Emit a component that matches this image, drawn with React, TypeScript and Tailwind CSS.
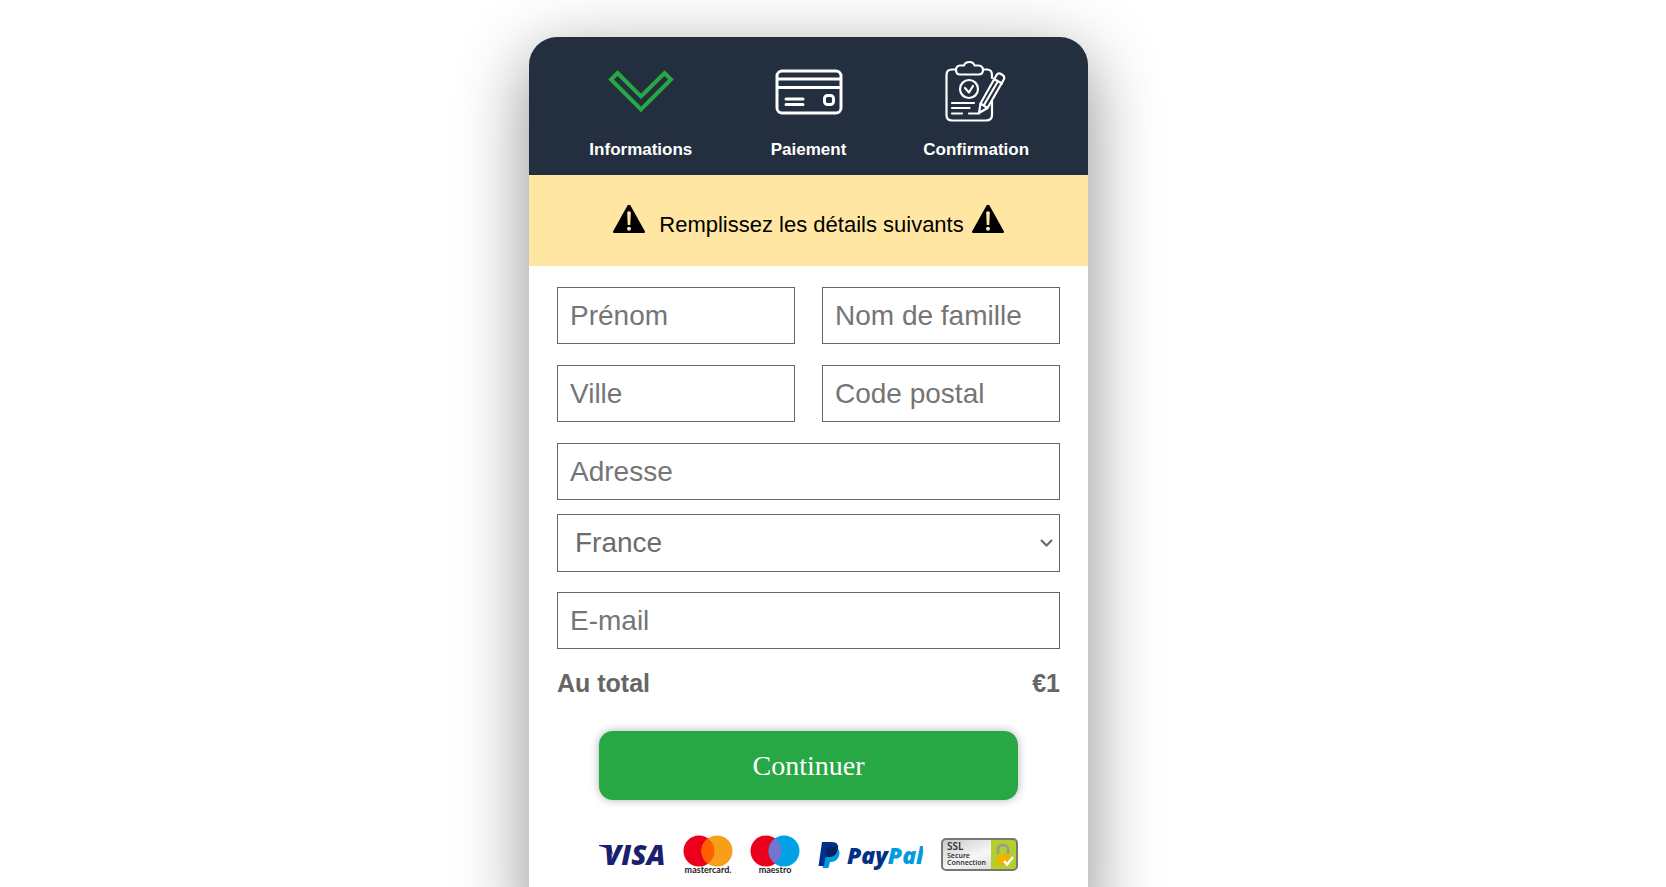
import type { ReactNode } from 'react';

interface StepProps {
  label: string;
  children: ReactNode;
}

function Step({ label, children }: StepProps) {
  return (
    <li className="flex flex-1 flex-col items-center">
      {children}
      <span className="mt-[15px] text-[17px] leading-5 font-bold text-white">{label}</span>
    </li>
  );
}

function ChevronIcon() {
  return (
    <svg className="h-17 w-17" viewBox="0 0 68 68" fill="none" stroke="#28a745" strokeWidth={4} aria-hidden="true">
      <path d="M10.500 16 L34 39.500 L57.500 16 L64 22.500 L34 52.500 L4 22.500 Z" />
    </svg>
  );
}

function CardIcon() {
  return (
    <svg className="h-17 w-17" viewBox="0 0 68 68" fill="none" stroke="#fff" aria-hidden="true">
      <rect x="2" y="14" width="64" height="42" rx="5" strokeWidth={3} />
      <path d="M2 22 H66 M2 30.500 H66" strokeWidth={3} />
      <path d="M11 42 H28 M11 47.500 H28" strokeWidth={3} strokeLinecap="round" />
      <rect x="49.500" y="38.500" width="9" height="9" rx="3" strokeWidth={3} />
    </svg>
  );
}

function ClipboardIcon() {
  return (
    <svg
      className="h-17 w-17"
      viewBox="0 0 68 68"
      fill="none"
      stroke="#fff"
      strokeWidth={2.2}
      strokeLinecap="round"
      strokeLinejoin="round"
      aria-hidden="true"
    >
      <path d="M14 12.500 H10 Q4.500 12.500 4.500 18 V58 Q4.500 63.500 10 63.500 H44 Q50 63.500 50 58 V44 M41 12.500 H45 Q50 12.500 50 18 V21" />
      <path d="M18 8.500 H22 Q23 5 27.500 5 Q31.500 5 32.500 8.500 H36.500 Q41 9 41 13 Q41 17.500 36.500 17.500 H18 Q14 17.500 14 13 Q14 9 18 8.500 Z" />
      <circle cx="27" cy="32" r="9" />
      <path d="M23 31 L27 35.500 L31 29" />
      <path d="M10 46 H32 M10 51 H27.500 M10 56.500 H20 M27 56.500 H37" />
      <path d="M37 56 L38.500 46.500 L54 19 Q56 15 59 17 L60.500 18 Q63.500 20 61.500 23 L45.500 51 Z" />
      <path d="M52 22 L60 26.500 M38.500 46.500 L45.500 51 M42 48 L55.500 25" />
    </svg>
  );
}

function WarningIcon() {
  return (
    <svg className="mb-1 h-8 w-8" viewBox="0 0 32 32" aria-hidden="true">
      <path d="M14.500 2.500 Q16 1 17.500 2.500 L32 28.500 Q32 30 31 30 H1 Q0 30 0 28.500 Z" fill="#000" />
      <path d="M14.200 9 Q16 7.500 17.800 9 L17.300 22 H14.700 Z" fill="#ffe7a3" />
      <circle cx="16" cy="25.800" r="2" fill="#ffe7a3" />
    </svg>
  );
}

interface FieldProps {
  name: string;
  label: string;
  type?: string;
}

function Field({ name, label, type = 'text' }: FieldProps) {
  return (
    <input
      name={name}
      type={type}
      placeholder={label}
      aria-label={label}
      className="block h-[57px] w-full min-w-0 border border-[#666] px-3 text-[28px] text-[#333] placeholder:text-[#757575]"
    />
  );
}

function VisaLogo() {
  return (
    <svg className="h-10 w-[66px]" viewBox="0 0 66 40" role="img" aria-label="Visa">
      <text x="5" y="30" fontFamily="Open Sans, sans-serif" fontSize="28" fontWeight="800" fontStyle="italic" fill="#1a1f71">VISA</text>
      <path d="M0 10 H9 Q12 10 12.500 13 L14 20 Q9 12 0 11 Z" fill="#1a1f71" />
    </svg>
  );
}

interface CirclesLogoProps {
  name: string;
  right: string;
  overlap: string;
}

function CirclesLogo({ name, right, overlap }: CirclesLogoProps) {
  return (
    <svg className="h-10 w-[50px]" viewBox="0 0 50 40" role="img" aria-label={name}>
      <circle cx="16" cy="16" r="15.500" fill="#eb001b" />
      <circle cx="34" cy="16" r="15.500" fill={right} />
      <path d="M25 3.400 A15.500 15.500 0 0 1 25 28.600 A15.500 15.500 0 0 1 25 3.400 Z" fill={overlap} />
      <text x="25" y="38" textAnchor="middle" fontFamily="Lato, sans-serif" fontSize="9" fontWeight="700" fill="#222">{name}</text>
    </svg>
  );
}

function PaypalLogo() {
  return (
    <svg className="h-10 w-[105px]" viewBox="0 0 105 40" role="img" aria-label="PayPal">
      <path d="M8 12 H17 Q23 14 21 21 Q19 27 12 27 L10.500 33 H4.500 Z" fill="#009cde" />
      <path d="M4 7 H14 Q21 7 20 14 Q18 22 10 22 H7.500 L6 31 H0.500 Z" fill="#003087" />
      <path d="M9 12 H19.500 Q20 22 10 22 H7.500 Z" fill="#012169" />
      <text x="29" y="29" fontFamily="Open Sans, sans-serif" fontSize="23" fontWeight="800" fontStyle="italic" fill="#003087">
        Pay<tspan fill="#009cde">Pal</tspan>
      </text>
    </svg>
  );
}

function SslBadge() {
  return (
    <svg className="h-10 w-[77px]" viewBox="0 0 77 40" role="img" aria-label="SSL Secure Connection">
      <defs>
        <linearGradient id="ssl-bg" x1="0" y1="0" x2="1" y2="1">
          <stop offset="0" stopColor="#c9c9c9" />
          <stop offset="0.5" stopColor="#f7f7f7" />
          <stop offset="1" stopColor="#cfcfcf" />
        </linearGradient>
      </defs>
      <rect x="1" y="4" width="75" height="31" rx="4" fill="url(#ssl-bg)" />
      <path d="M50 4 H72 Q76 4 76 8 V31 Q76 35 72 35 H50 Z" fill="#b2cf2e" />
      <rect x="1" y="4" width="75" height="31" rx="4" fill="none" stroke="#777" strokeWidth={2} />
      <g fontFamily="Noto Sans, sans-serif" fontWeight="600" fill="#333">
        <text x="6" y="15" fontSize="10">SSL</text>
        <text x="6" y="23" fontSize="7">Secure</text>
        <text x="6" y="30" fontSize="7">Connection</text>
      </g>
      <path d="M57 20 V15 Q57 10 62 10 Q67 10 67 15 V20" fill="none" stroke="#999" strokeWidth={2.5} />
      <rect x="56" y="19" width="13" height="11" rx="1" fill="#f0b400" />
      <path d="M63 26 L66 29.500 L72 22" fill="none" stroke="#fff" strokeWidth={2.5} />
    </svg>
  );
}

export default function App() {
  return (
    <main className="h-screen overflow-hidden bg-white pt-[37px] pr-[49px] font-['Liberation_Sans',Arial,sans-serif]">
      <div className="mx-auto min-h-screen max-w-[559px] overflow-hidden rounded-t-[28px] bg-white shadow-[0_20px_70px_rgba(0,0,0,0.45)]">
        {/* Steps */}
        <ol className="flex bg-[#232f3e] px-7 pt-5 pb-[15px]">
          <Step label="Informations"><ChevronIcon /></Step>
          <Step label="Paiement"><CardIcon /></Step>
          <Step label="Confirmation"><ClipboardIcon /></Step>
        </ol>

        {/* Notice */}
        <div className="flex h-[91px] items-center justify-center bg-[#ffe7a3] text-[22px] text-black">
          <WarningIcon />
          <p className="mt-2 mr-2 ml-[14px]">Remplissez les détails suivants</p>
          <WarningIcon />
        </div>

        <form className="px-7 pt-[21px]" onSubmit={(e) => e.preventDefault()}>
          <div className="grid grid-cols-2 gap-x-[27px] gap-y-[21px]">
            <Field name="prenom" label="Prénom" />
            <Field name="nom" label="Nom de famille" />
            <Field name="ville" label="Ville" />
            <Field name="code-postal" label="Code postal" />
            <div className="col-span-2">
              <Field name="adresse" label="Adresse" />
            </div>
          </div>

          <div className="relative mt-[14px] mb-5">
            <select
              name="pays"
              defaultValue="FR"
              aria-label="Pays"
              className="block h-[58px] w-full appearance-none border border-[#666] px-[17px] text-[28px] text-[#6b6b6b]"
            >
              <option value="FR">France</option>
            </select>
            <svg
              className="pointer-events-none absolute inset-y-0 right-[7px] my-auto h-2 w-[13px]"
              viewBox="0 0 13 8"
              fill="none"
              stroke="#666"
              strokeWidth={2}
              aria-hidden="true"
            >
              <path d="M1 1 L6.500 6.500 L12 1" />
            </svg>
          </div>

          <Field name="email" label="E-mail" type="email" />

          <div className="mt-5 flex justify-between text-[25px] leading-7 font-bold text-[#666]">
            <span>Au total</span>
            <span>€1</span>
          </div>

          <div className="mx-auto mt-[34px] w-5/6">
            <button
              type="submit"
              className="block h-[69px] w-full rounded-[14px] bg-[#28a745] font-['Liberation_Serif','Times_New_Roman',serif] text-[28px] text-white shadow-[0_0_10px_rgba(0,0,0,0.3)]"
            >
              Continuer
            </button>
            <div className="mt-[35px] flex items-center justify-between">
              <VisaLogo />
              <CirclesLogo name="mastercard." right="#f79e1b" overlap="#ff5f00" />
              <CirclesLogo name="maestro" right="#00a2e5" overlap="#7375cf" />
              <PaypalLogo />
              <SslBadge />
            </div>
          </div>
        </form>
      </div>
    </main>
  );
}
